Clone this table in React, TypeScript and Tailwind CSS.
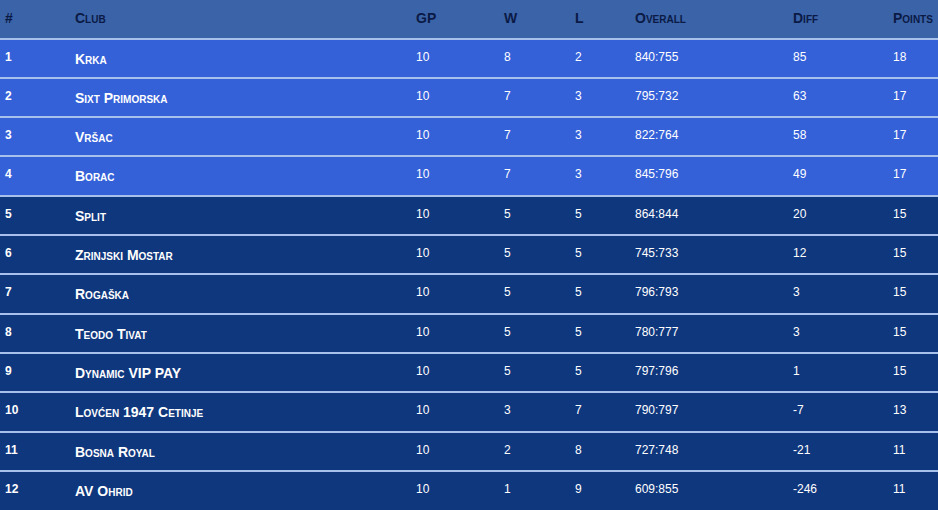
import React from "react";

type Row = {
  pos: number;
  club: string;
  gp: number;
  w: number;
  l: number;
  overall: string;
  diff: number;
  pts: number;
};

const rows: Row[] = [
  { pos: 1, club: "Krka", gp: 10, w: 8, l: 2, overall: "840:755", diff: 85, pts: 18 },
  { pos: 2, club: "Sixt Primorska", gp: 10, w: 7, l: 3, overall: "795:732", diff: 63, pts: 17 },
  { pos: 3, club: "Vršac", gp: 10, w: 7, l: 3, overall: "822:764", diff: 58, pts: 17 },
  { pos: 4, club: "Borac", gp: 10, w: 7, l: 3, overall: "845:796", diff: 49, pts: 17 },
  { pos: 5, club: "Split", gp: 10, w: 5, l: 5, overall: "864:844", diff: 20, pts: 15 },
  { pos: 6, club: "Zrinjski Mostar", gp: 10, w: 5, l: 5, overall: "745:733", diff: 12, pts: 15 },
  { pos: 7, club: "Rogaška", gp: 10, w: 5, l: 5, overall: "796:793", diff: 3, pts: 15 },
  { pos: 8, club: "Teodo Tivat", gp: 10, w: 5, l: 5, overall: "780:777", diff: 3, pts: 15 },
  { pos: 9, club: "Dynamic VIP PAY", gp: 10, w: 5, l: 5, overall: "797:796", diff: 1, pts: 15 },
  { pos: 10, club: "Lovćen 1947 Cetinje", gp: 10, w: 3, l: 7, overall: "790:797", diff: -7, pts: 13 },
  { pos: 11, club: "Bosna Royal", gp: 10, w: 2, l: 8, overall: "727:748", diff: -21, pts: 11 },
  { pos: 12, club: "AV Ohrid", gp: 10, w: 1, l: 9, overall: "609:855", diff: -246, pts: 11 },
];

const heights = ["h-[39px]", "h-[39px]", "h-[39px]", "h-[40px]", "h-[39px]", "h-[39px]", "h-[40px]", "h-[39px]", "h-[39px]", "h-[40px]", "h-[39px]", "h-[40px]"];

const grid = "grid grid-cols-[70px_341px_88px_71px_60px_158px_100px_50px]";

export default function App() {
  const headers = ["#", "Club", "GP", "W", "L", "Overall", "Diff", "Points"];
  return (
    <div className="w-[938px] h-[510px] overflow-hidden bg-[#0f377d] font-['Liberation_Sans',Arial,sans-serif]">
      <div className={`${grid} h-[38px] bg-[#3a63a8] text-[#0b1a45] text-[14px] font-bold [font-variant:small-caps]`}>
        {headers.map((h) => (
          <div key={h} className="flex items-center pl-[5px] pb-[1px]">
            {h}
          </div>
        ))}
      </div>
      {rows.map((r, i) => (
        <div
          key={r.pos}
          className={`${grid} ${heights[i]} border-t-2 border-[#a8c0ec] text-white ${
            r.pos <= 4 ? "bg-[#3461d8]" : "bg-[#0f377d]"
          }`}
        >
          <div className="flex items-center pl-[5px] pb-[4px] text-[12px] font-bold">{r.pos}</div>
          <div className="flex items-center pl-[5px] pt-[1px] text-[14px] font-bold [font-variant:small-caps]">
            {r.club}
          </div>
          <div className="flex items-center pl-[5px] pb-[4px] text-[12px]">{r.gp}</div>
          <div className="flex items-center pl-[5px] pb-[4px] text-[12px]">{r.w}</div>
          <div className="flex items-center pl-[5px] pb-[4px] text-[12px]">{r.l}</div>
          <div className="flex items-center pl-[5px] pb-[4px] text-[12px]">{r.overall}</div>
          <div className="flex items-center pl-[5px] pb-[4px] text-[12px]">{r.diff}</div>
          <div className="flex items-center pl-[5px] pb-[4px] text-[12px]">{r.pts}</div>
        </div>
      ))}
    </div>
  );
}
